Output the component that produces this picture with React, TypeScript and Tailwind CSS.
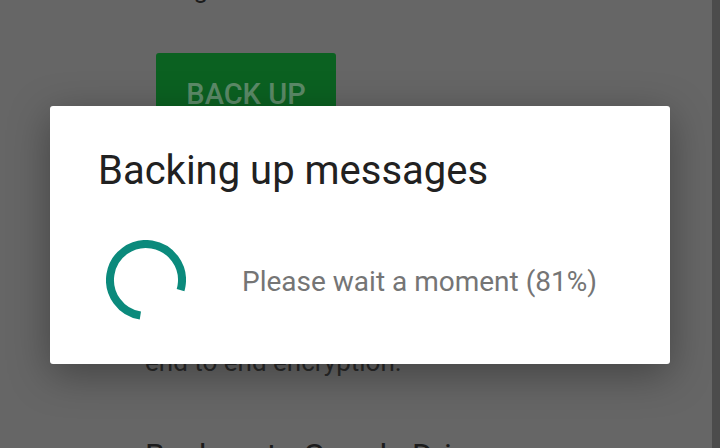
const Spinner = () => (
  <svg width="80" height="80" viewBox="0 0 80 80" className="shrink-0">
    <circle
      cx="40"
      cy="40"
      r="36"
      fill="none"
      stroke="#0b8a7c"
      strokeWidth="8"
      strokeDasharray="174 52"
      transform="rotate(99 40 40)"
    />
  </svg>
);

const App = () => {
  return (
    <div className="relative w-[720px] h-[448px] overflow-hidden bg-[#666666] font-['Roboto',sans-serif] flex">
      {/* page behind the scrim */}
      <div className="flex-1 flex flex-col">
        <div className="pl-[145px] -mt-[26px] text-[26px] leading-[31px] text-[#1c1c1c]">
          using
        </div>
        <div className="pl-[156px] pt-[48px]">
          <div className="w-[180px] h-[80px] pt-[4px] rounded-[3px] bg-[#0b6121] flex items-center justify-center text-[29px] font-medium text-[#5c8a68]">
            BACK UP
          </div>
        </div>
        <div className="mt-[42px] h-px bg-[#5a5a5a]" />
        <div className="pl-[145px] pt-[172px] text-[26px] leading-[31px] text-[#2a2a2a]">
          end to end encryption.
        </div>
        <div className="mt-[45px] h-px bg-[#5f5f5f]" />
        <div className="pl-[145px] pt-[13px] text-[32px] leading-[38px] text-[#1c1c1c]">
          Back up to Google Drive
        </div>
      </div>
      <div className="w-[8px] bg-[#4c4c4c]" />

      {/* dialog */}
      <div className="absolute left-[50px] top-[106px] w-[620px] h-[258px] bg-white rounded-[3px] shadow-[0_10px_40px_rgba(0,0,0,0.35)] pl-[48px] pt-[41px]">
        <h1 className="text-[40px] leading-[48px] text-[#212121]">Backing up messages</h1>
        <div className="flex items-center gap-[56px] pl-[8px] mt-[45px]">
          <Spinner />
          <span className="pt-[3px] text-[28px] text-[#757575]">Please wait a moment (81%)</span>
        </div>
      </div>
    </div>
  );
};

export default App;
